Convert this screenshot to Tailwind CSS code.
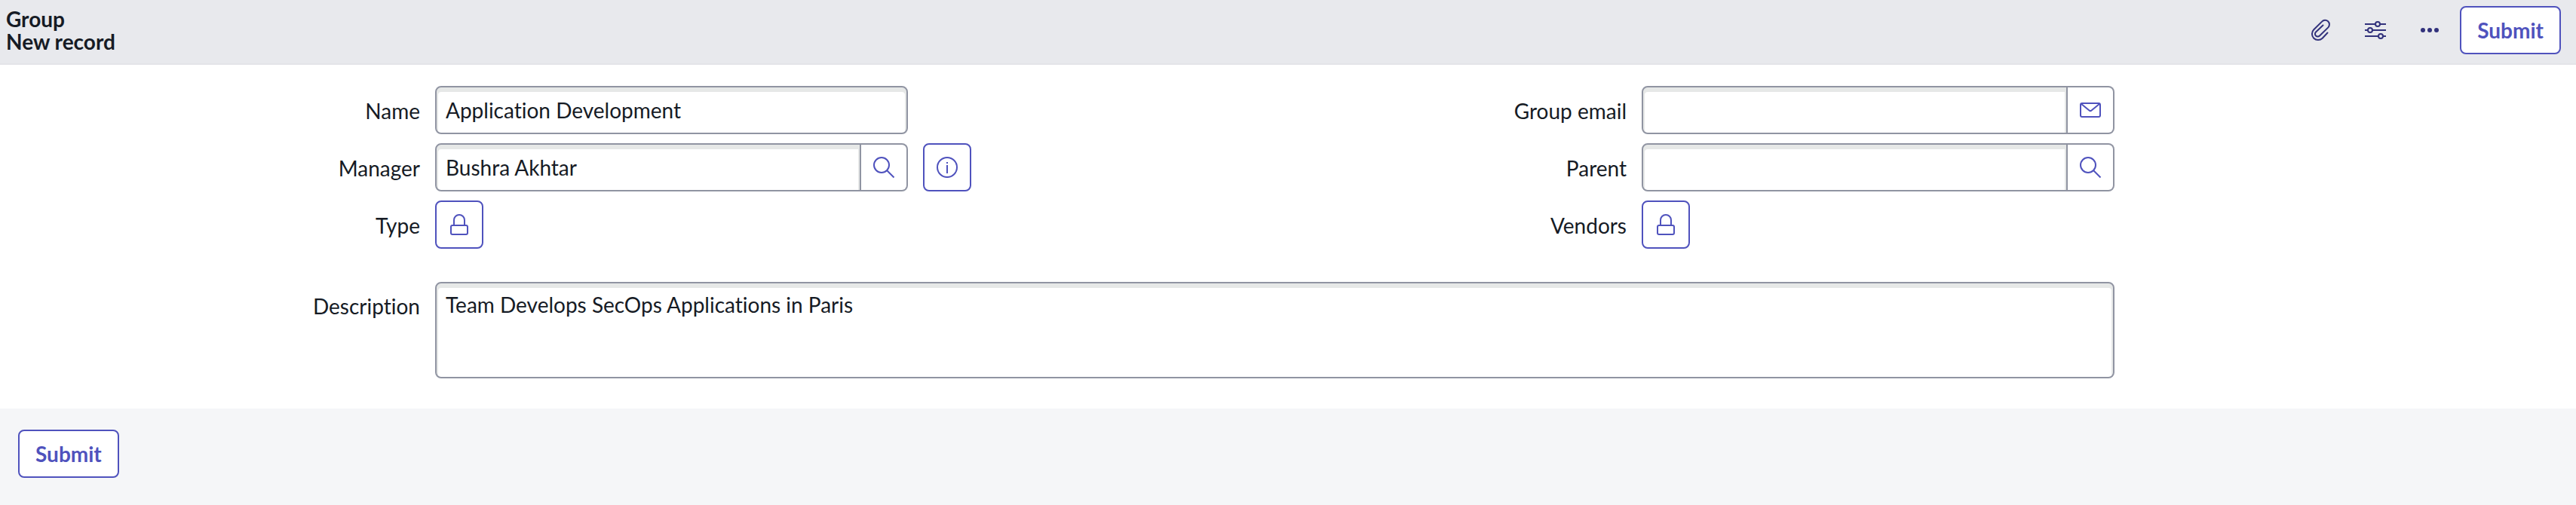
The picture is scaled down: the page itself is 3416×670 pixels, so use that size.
<!DOCTYPE html>
<html lang="en">

<head>
    <meta charset="UTF-8">
    <meta name="viewport" content="width=device-width, initial-scale=1.0">
    <title>Group - New record</title>
    <script src="https://cdn.jsdelivr.net/npm/@tailwindcss/browser@4"></script>
</head>

<body class="flex flex-col min-h-screen bg-white text-[#161b25] text-[28px] leading-[40px] font-['Lato',sans-serif] [font-variant-ligatures:none]">
    <!-- Header -->
    <header class="flex items-start justify-between h-[86px] bg-[#e8e9ed] border-b-2 border-[#e3e4e8] pl-2 pr-5 pt-2">
        <h1 class="font-bold leading-[30px] pt-0.5">
            <span class="block">Group</span>
            <span class="block">New record</span>
        </h1>
        <div class="flex items-center text-[#32327c]">
            <button type="button" aria-label="Attachments" class="flex items-center justify-center w-[72px] h-16">
                <svg class="size-8" viewBox="0 0 32 32" fill="none" stroke="currentColor" stroke-width="2" stroke-linecap="round" stroke-linejoin="round">
                    <path d="M24.500 19.500L17.700 26.700A8 8 0 0 1 6.300 15.300L17.100 4.600A5.500 5.500 0 0 1 25.400 12.400L14 23.500A3.500 3.500 0 0 1 9 18.500L18.500 9.500" />
                </svg>
            </button>
            <button type="button" aria-label="Personalize form" class="flex items-center justify-center w-[72px] h-16">
                <svg class="size-8" viewBox="0 0 32 32" fill="none" stroke="currentColor" stroke-width="2">
                    <path d="M2 8h14M22 8h8M2 16h4M12 16h18M2 24h18M26 24h4" />
                    <circle cx="19" cy="8" r="3" />
                    <circle cx="9" cy="16" r="3" />
                    <circle cx="23" cy="24" r="3" />
                </svg>
            </button>
            <button type="button" aria-label="More options" class="flex items-center justify-center w-[72px] h-16">
                <svg class="size-8" viewBox="0 0 32 32" fill="currentColor">
                    <circle cx="7" cy="16" r="3" />
                    <circle cx="16" cy="16" r="3" />
                    <circle cx="25" cy="16" r="3" />
                </svg>
            </button>
            <button type="submit" form="groupForm"
                class="h-16 ml-1 px-[21px] bg-white border-2 border-[#4f52bd] rounded-lg text-[#4f52bd] font-bold">Submit</button>
        </div>
    </header>

    <!-- Form -->
    <form id="groupForm"
        class="grid grid-cols-[557fr_627fr_356fr_557fr_627fr_592fr] gap-x-5 gap-y-3 items-center pt-7 pb-10">
        <label for="name" class="pt-0.5 text-right">Name</label>
        <input type="text" id="name" value="Application Development"
            class="w-full h-16 px-3 bg-white border-2 border-[#9094a2] rounded-lg shadow-[inset_0_4px_0_2px_#e6e8e7]">

        <label for="email" class="col-start-4 pt-0.5 text-right">Group email</label>
        <div class="flex h-16">
            <input type="email" id="email"
                class="flex-1 min-w-0 px-3 bg-white border-2 border-[#9094a2] rounded-l-lg shadow-[inset_0_4px_0_2px_#e6e8e7]">
            <button type="button" aria-label="Send email"
                class="flex items-center justify-center w-[62px] border-2 border-l-0 border-[#9094a2] rounded-r-lg text-[#4f52bd]">
                <svg class="size-8" viewBox="0 0 32 32" fill="none" stroke="currentColor" stroke-width="2">
                    <rect x="3" y="7" width="26" height="18" rx="2" />
                    <path d="M3.500 7.500L14.500 16.500Q16 17.800 17.500 16.500L28.500 7.500" />
                </svg>
            </button>
        </div>

        <label for="manager" class="col-start-1 pt-0.5 text-right">Manager</label>
        <div class="flex h-16">
            <input type="text" id="manager" value="Bushra Akhtar"
                class="flex-1 min-w-0 px-3 bg-white border-2 border-[#9094a2] rounded-l-lg shadow-[inset_0_4px_0_2px_#e6e8e7]">
            <button type="button" aria-label="Look up manager"
                class="flex items-center justify-center w-[62px] border-2 border-l-0 border-[#9094a2] rounded-r-lg text-[#4f52bd]">
                <svg class="size-8" viewBox="0 0 32 32" fill="none" stroke="currentColor" stroke-width="2">
                    <circle cx="13" cy="13" r="10" />
                    <path d="M20 20l9.500 9.500" />
                </svg>
            </button>
        </div>
        <button type="button" aria-label="Preview manager"
            class="flex items-center justify-center size-16 border-2 border-[#4f52bd] rounded-lg text-[#4f52bd]">
            <svg class="size-8" viewBox="0 0 32 32" fill="none" stroke="currentColor" stroke-width="2">
                <circle cx="16" cy="16" r="13" />
                <path d="M16 9v2M16 13v11" />
            </svg>
        </button>

        <label for="parent" class="pt-0.5 text-right">Parent</label>
        <div class="flex h-16">
            <input type="text" id="parent"
                class="flex-1 min-w-0 px-3 bg-white border-2 border-[#9094a2] rounded-l-lg shadow-[inset_0_4px_0_2px_#e6e8e7]">
            <button type="button" aria-label="Look up parent"
                class="flex items-center justify-center w-[62px] border-2 border-l-0 border-[#9094a2] rounded-r-lg text-[#4f52bd]">
                <svg class="size-8" viewBox="0 0 32 32" fill="none" stroke="currentColor" stroke-width="2">
                    <circle cx="13" cy="13" r="10" />
                    <path d="M20 20l9.500 9.500" />
                </svg>
            </button>
        </div>

        <label for="type" class="col-start-1 pt-0.5 text-right">Type</label>
        <button type="button" id="type"
            class="flex items-center justify-center size-16 border-2 border-[#4f52bd] rounded-lg text-[#4f52bd]">
            <svg class="size-8" viewBox="0 0 32 32" fill="none" stroke="currentColor" stroke-width="2">
                <rect x="5" y="17" width="22" height="12" rx="2" />
                <path d="M9 17v-7a7 7 0 0 1 14 0v7" />
            </svg>
        </button>

        <label for="vendors" class="col-start-4 pt-0.5 text-right">Vendors</label>
        <button type="button" id="vendors"
            class="flex items-center justify-center size-16 border-2 border-[#4f52bd] rounded-lg text-[#4f52bd]">
            <svg class="size-8" viewBox="0 0 32 32" fill="none" stroke="currentColor" stroke-width="2">
                <rect x="5" y="17" width="22" height="12" rx="2" />
                <path d="M9 17v-7a7 7 0 0 1 14 0v7" />
            </svg>
        </button>

        <label for="description" class="col-start-1 self-start mt-8 pt-3 text-right">Description</label>
        <textarea id="description"
            class="col-span-4 block w-full h-32 mt-8 px-3 pt-2 bg-white border-2 border-[#9094a2] rounded-lg resize-none shadow-[inset_0_4px_0_2px_#e6e8e7]">Team Develops SecOps Applications in Paris</textarea>
    </form>

    <!-- Footer -->
    <footer class="flex-1 bg-[#f5f6f8] px-6 pt-7">
        <button type="submit" form="groupForm"
            class="h-16 px-[21px] bg-white border-2 border-[#4f52bd] rounded-lg text-[#4f52bd] font-bold">Submit</button>
    </footer>
</body>

</html>
